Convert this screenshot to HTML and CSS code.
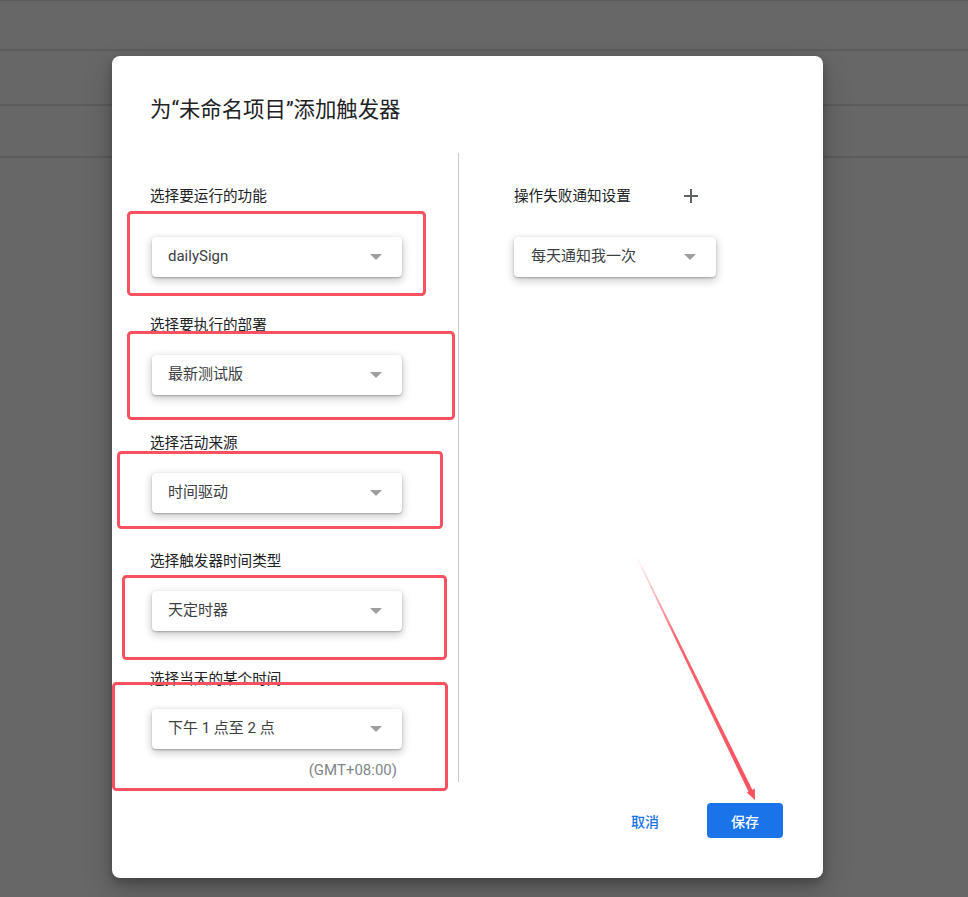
FILE: index.html
```html
<!DOCTYPE html>
<html lang="zh-CN">
<head>
    <meta charset="UTF-8">
    <title>添加触发器</title>
    <link rel="stylesheet" href="styles.css">
</head>
<body>
    <div class="backdrop">
        <div class="band band-top"></div>
        <div class="band band-mid"></div>
        <div class="band band-low"></div>
    </div>

    <div class="dialog">
        <h2 class="dialog-title">为“未命名项目”添加触发器</h2>

        <div class="dialog-body">
            <div class="col col-left">
                <div class="field field-first">
                    <div class="field-label">选择要运行的功能</div>
                    <div class="select"><span>dailySign</span><i class="caret"></i></div>
                </div>
                <div class="field">
                    <div class="field-label">选择要执行的部署</div>
                    <div class="select"><span>最新测试版</span><i class="caret"></i></div>
                </div>
                <div class="field">
                    <div class="field-label">选择活动来源</div>
                    <div class="select"><span>时间驱动</span><i class="caret"></i></div>
                </div>
                <div class="field">
                    <div class="field-label">选择触发器时间类型</div>
                    <div class="select"><span>天定时器</span><i class="caret"></i></div>
                </div>
                <div class="field">
                    <div class="field-label">选择当天的某个时间</div>
                    <div class="select"><span>下午 1 点至 2 点</span><i class="caret"></i></div>
                    <div class="tz">(GMT+08:00)</div>
                </div>
            </div>

            <div class="col col-right">
                <div class="notify-row">
                    <div class="field-label">操作失败通知设置</div>
                    <svg class="plus" width="24" height="24" viewBox="0 0 24 24">
                        <path d="M19 13h-6v6h-2v-6H5v-2h6V5h2v6h6v2z" fill="#5f6368"/>
                    </svg>
                </div>
                <div class="select select-small"><span>每天通知我一次</span><i class="caret"></i></div>
            </div>
        </div>

        <div class="dialog-footer">
            <button class="btn btn-text">取消</button>
            <button class="btn btn-primary">保存</button>
        </div>
    </div>

    <!-- screenshot annotations drawn on top -->
    <svg class="marks" width="968" height="897" viewBox="0 0 968 897">
        <defs>
            <linearGradient id="fade" x1="635" y1="555" x2="755" y2="800" gradientUnits="userSpaceOnUse">
                <stop offset="0" stop-color="#f8515f" stop-opacity="0"/>
                <stop offset="0.35" stop-color="#f8515f" stop-opacity="0.9"/>
                <stop offset="1" stop-color="#f8515f"/>
            </linearGradient>
        </defs>
        <g fill="none" stroke="#f8515f" stroke-width="3">
            <rect x="128.5" y="212.5" width="296" height="82" rx="3"/>
            <rect x="128.5" y="332.5" width="325" height="86" rx="3"/>
            <rect x="118.5" y="452.5" width="323" height="75" rx="3"/>
            <rect x="123.5" y="576.5" width="322" height="82" rx="3"/>
            <rect x="113.5" y="683.5" width="333" height="106" rx="3"/>
        </g>
        <polygon points="635,555 636.2,554.6 753,791 749,792.8" fill="url(#fade)"/>
        <polygon points="755,800 754.8,788.6 746.8,792.6" fill="#f8515f"/>
    </svg>
</body>
</html>
```

FILE: styles.css
```css
body {
    margin: 0;
    width: 968px;
    height: 897px;
    overflow: hidden;
    background: #676767;
    font-family: 'Roboto', 'Noto Sans CJK SC', sans-serif;
    position: relative;
}

.backdrop {
    display: flex;
    flex-direction: column;
    border-top: 1px solid #5a5a5a;
}

.band {
    border-bottom: 2px solid #5c5c5c;
}

.band-top { height: 48px; }
.band-mid { height: 53px; }
.band-low { height: 50px; }

.dialog {
    position: absolute;
    left: 112px;
    top: 56px;
    width: 711px;
    height: 822px;
    box-sizing: border-box;
    padding: 40px 40px 40px 38px;
    background: #fff;
    border-radius: 8px;
    box-shadow: 0 4px 10px rgba(0, 0, 0, 0.25), 0 12px 30px rgba(0, 0, 0, 0.2);
    display: flex;
    flex-direction: column;
}

.dialog-title {
    margin: 0;
    font-size: 21.4px;
    line-height: 28px;
    font-weight: 400;
    color: #202124;
}

.dialog-body {
    display: flex;
    margin-top: 29px;
    height: 629px;
}

.col-left {
    width: 308px;
    border-right: 1px solid #c8c8c8;
    padding-top: 23px;
}

.col-right {
    padding: 31px 0 0 55px;
}

.field {
    margin-top: 38px;
    display: flex;
    flex-direction: column;
    gap: 20px;
}

.field-first {
    margin-top: 10px;
    gap: 31px;
}

.field-label {
    font-size: 14.6px;
    line-height: 20px;
    color: #202124;
}

.select {
    width: 250px;
    height: 40px;
    margin-left: 2px;
    box-sizing: border-box;
    padding: 0 20px 0 16px;
    display: flex;
    align-items: center;
    justify-content: space-between;
    border-radius: 4px;
    background: #fff;
    box-shadow: 0 1px 2px rgba(0, 0, 0, 0.25), 0 3px 8px 1px rgba(0, 0, 0, 0.2);
    font-size: 15px;
    line-height: 20px;
    color: #3c4043;
}

.select span {
    position: relative;
    top: -1px;
}

.select-small {
    width: 202px;
    margin-left: 0;
    margin-top: 29px;
    padding-left: 17px;
}

.caret {
    width: 0;
    height: 0;
    border-left: 6px solid transparent;
    border-right: 6px solid transparent;
    border-top: 6px solid #9e9e9e;
}

.tz {
    margin-top: -9px;
    width: 247px;
    text-align: right;
    font-size: 15px;
    line-height: 20px;
    color: #80868b;
}

.notify-row {
    display: flex;
    align-items: center;
    gap: 48px;
}

.dialog-footer {
    margin-top: 21px;
    display: flex;
    justify-content: flex-end;
    align-items: center;
    gap: 24px;
}

.btn {
    font-family: inherit;
    font-size: 14px;
    font-weight: 500;
    border: none;
    background: none;
    cursor: pointer;
    border-radius: 4px;
    height: 35px;
}

.btn-text {
    color: #1a73e8;
    padding: 0 24px;
}

.btn-primary {
    width: 76px;
    background: #1a73e8;
    color: #fff;
}

.marks {
    position: absolute;
    left: 0;
    top: 0;
    pointer-events: none;
}
```
